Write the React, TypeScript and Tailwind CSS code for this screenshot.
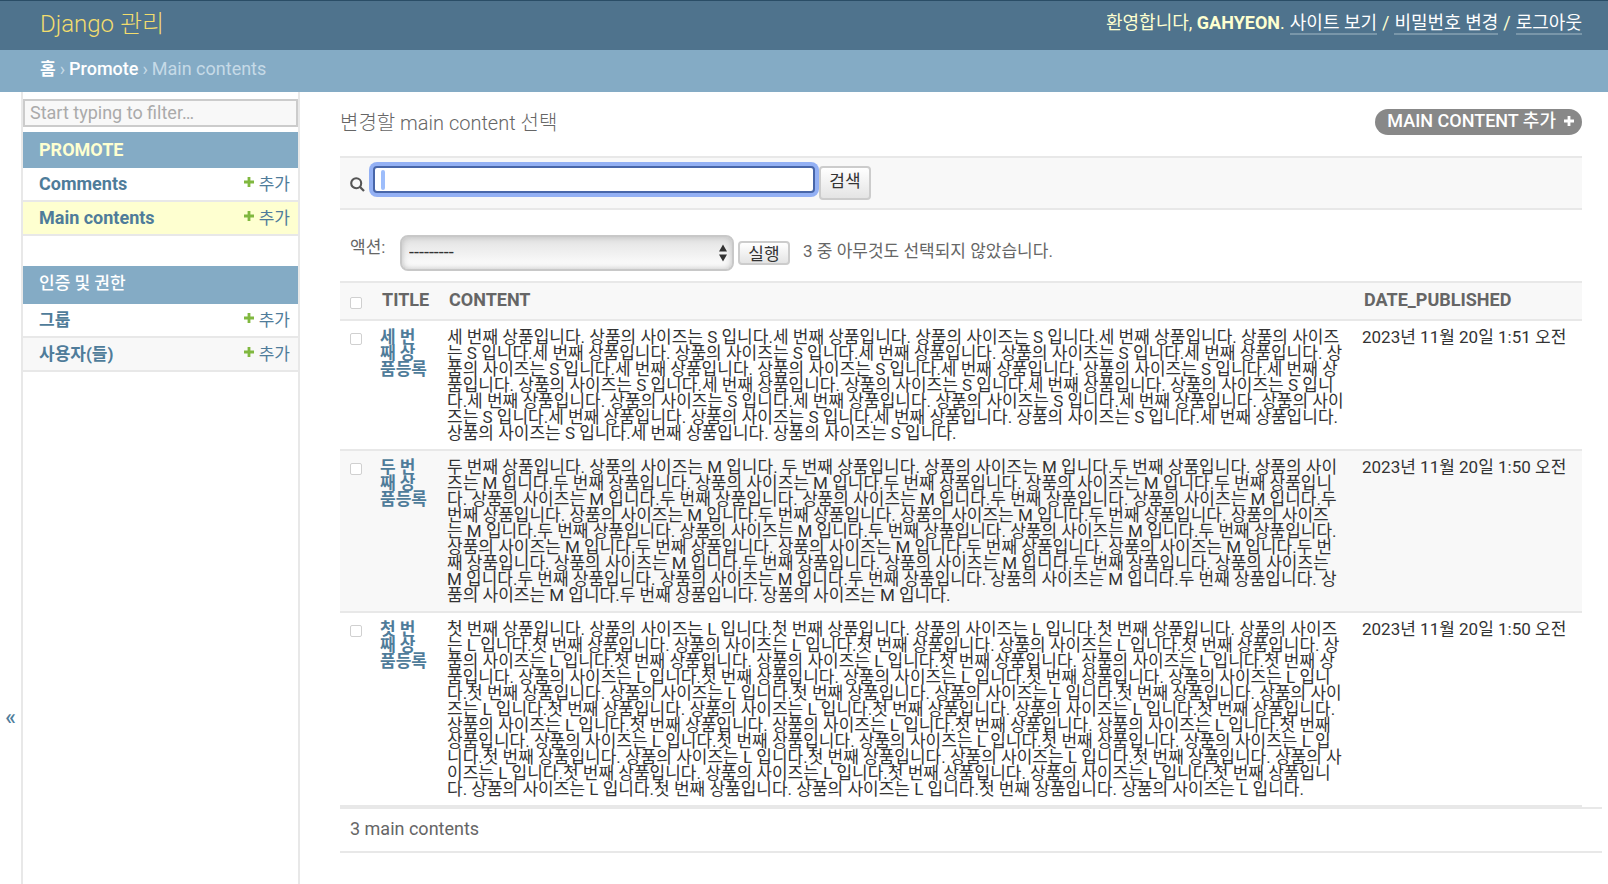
import React from "react";

const rows = [
  {
    title: "세 번째 상품등록",
    content: "세 번째 상품입니다. 상품의 사이즈는 S 입니다.".repeat(18),
    date: "2023년 11월 20일 1:51 오전",
  },
  {
    title: "두 번째 상품등록",
    content: [
      "두 번째 상품입니다. 상품의 사이즈는 M 입니다. 두 번째 상품입니다. 상품의 사이즈는 M 입니다.두 번째 상품입니다. 상품의 사이",
      "즈는 M 입니다.두 번째 상품입니다. 상품의 사이즈는 M 입니다.두 번째 상품입니다. 상품의 사이즈는 M 입니다.두 번째 상품입니",
      "다. 상품의 사이즈는 M 입니다.두 번째 상품입니다. 상품의 사이즈는 M 입니다.두 번째 상품입니다. 상품의 사이즈는 M 입니다.두",
      "번째 상품입니다. 상품의 사이즈는 M 입니다.두 번째 상품입니다. 상품의 사이즈는 M 입니다.두 번째 상품입니다. 상품의 사이즈",
      "는 M 입니다.두 번째 상품입니다. 상품의 사이즈는 M 입니다.두 번째 상품입니다. 상품의 사이즈는 M 입니다.두 번째 상품입니다.",
      "상품의 사이즈는 M 입니다.두 번째 상품입니다. 상품의 사이즈는 M 입니다.두 번째 상품입니다. 상품의 사이즈는 M 입니다.두 번",
      "째 상품입니다. 상품의 사이즈는 M 입니다.두 번째 상품입니다. 상품의 사이즈는 M 입니다.두 번째 상품입니다. 상품의 사이즈는",
      "M 입니다.두 번째 상품입니다. 상품의 사이즈는 M 입니다.두 번째 상품입니다. 상품의 사이즈는 M 입니다.두 번째 상품입니다. 상",
      "품의 사이즈는 M 입니다.두 번째 상품입니다. 상품의 사이즈는 M 입니다.",
    ].join("\n"),
    date: "2023년 11월 20일 1:50 오전",
  },
  {
    title: "첫 번째 상품등록",
    content: "첫 번째 상품입니다. 상품의 사이즈는 L 입니다.".repeat(30),
    date: "2023년 11월 20일 1:50 오전",
  },
];

function Plus({ className }: { className: string }) {
  return (
    <svg viewBox="0 0 10 10" className={className} aria-hidden="true">
      <path d="M3.6 0h2.8v3.6H10v2.8H6.4V10H3.6V6.4H0V3.6h3.6z" fill="currentColor" />
    </svg>
  );
}

function AppModule({
  name,
  upper,
  models,
}: {
  name: string;
  upper?: boolean;
  models: { name: string; bg: string }[];
}) {
  return (
    <section className="mb-[30px]">
      <h2
        className={
          upper
            ? "flex h-9 items-center bg-[#84abc5] px-4 pb-px text-lg font-bold text-[#feffd0]"
            : "flex h-[38px] items-center bg-[#84abc5] px-4 pb-1 text-[17px] font-medium text-white"
        }
      >
        <a href="#">{name}</a>
      </h2>
      <ul>
        {models.map((m) => (
          <li
            key={m.name}
            className={`flex h-[34px] items-center justify-between border-b-2 border-[#e8e8e8] pr-2 pb-px pl-4 text-[#4f7c9a] ${m.bg}`}
          >
            <a href="#" className={upper ? "text-lg font-bold" : "font-bold"}>
              {m.name}
            </a>
            <a href="#" className="flex items-center gap-[5px]">
              <Plus className="mb-1 size-[10px] text-[#80b83f]" />
              추가
            </a>
          </li>
        ))}
      </ul>
    </section>
  );
}

function Check({ label }: { label: string }) {
  return (
    <input
      type="checkbox"
      aria-label={label}
      className="block size-3 appearance-none rounded-[2px] border border-[#d0d0d0] bg-white"
    />
  );
}

export default function App() {
  return (
    <div className="flex min-h-screen flex-col bg-white font-[Roboto,'Noto_Sans_CJK_KR',sans-serif] text-[17px] leading-5 text-[#333]">
      <header className="flex h-[50px] items-center justify-between border-t border-[#2a4d66] bg-[#4f738d] pr-[26px] pb-1 pl-10 text-[#feffd0]">
        <h1 className="text-2xl font-light text-[#f3dd6d]">
          <a href="#">Django 관리</a>
        </h1>
        <nav className="flex gap-[5px] text-lg leading-5">
          <span>
            환영합니다, <strong>GAHYEON</strong>.
          </span>
          <a href="#" className="border-b-2 border-[#7996a9] text-white">
            사이트 보기
          </a>
          /
          <a href="#" className="border-b-2 border-[#7996a9] text-white">
            비밀번호 변경
          </a>
          /
          <a href="#" className="border-b-2 border-[#7996a9] text-white">
            로그아웃
          </a>
        </nav>
      </header>
      <nav className="flex h-[42px] items-center gap-1 bg-[#84abc5] pb-1 pl-10 text-lg leading-5 text-[#c6dae7]">
        <a href="#" className="text-[17px] font-bold text-white">
          홈
        </a>
        ›
        <a href="#" className="font-medium text-white">
          Promote
        </a>
        › <span>Main contents</span>
      </nav>
      <div className="flex grow">
        <button
          aria-label="내비게이션 전환"
          className="flex w-[23px] shrink-0 items-start justify-center border-r-2 border-[#e8e8e8] pt-[613px] text-[22px] leading-6 font-medium text-[#4f7c9a]"
        >
          «
        </button>
        <aside className="w-[277px] shrink-0 border-r-2 border-[#e8e8e8] pt-[7px]">
          <input
            type="search"
            aria-label="Filter navigation items"
            placeholder="Start typing to filter…"
            className="mb-[5px] block h-7 w-full border-2 border-[#ccc] bg-[#f8f8f8] px-[5px] text-lg placeholder:text-[#aaa]"
          />
          <AppModule
            name="PROMOTE"
            upper
            models={[
              { name: "Comments", bg: "bg-white" },
              { name: "Main contents", bg: "bg-[#feffd0]" },
            ]}
          />
          <AppModule
            name="인증 및 권한"
            models={[
              { name: "그룹", bg: "bg-white" },
              { name: "사용자(들)", bg: "bg-[#f8f8f8]" },
            ]}
          />
        </aside>
        <main className="min-w-0 grow pr-[26px] pb-8 pl-10">
          <div className="flex h-16 items-start justify-between pt-[17px]">
            <h1 className="pt-0.5 text-xl leading-6 font-light text-[#666]">변경할 main content 선택</h1>
            <a
              href="#"
              className="flex h-[26px] items-center gap-2 rounded-full bg-[#888] pr-2 pb-0.5 pl-3 text-lg font-medium text-white"
            >
              MAIN CONTENT 추가
              <Plus className="size-[10px]" />
            </a>
          </div>
          <form
            className="flex h-[54px] items-start border-y-2 border-[#e8e8e8] bg-[#f8f8f8] pt-2 pl-[10px]"
            onSubmit={(e) => e.preventDefault()}
          >
            <label htmlFor="searchbar" className="mt-[11px] mr-2" aria-label="검색">
              <svg viewBox="0 0 15 15" className="size-[15px]" fill="none" stroke="#555">
                <circle cx="6.2" cy="6.2" r="5" strokeWidth="2.1" />
                <path d="M9.8 9.8L14 14" strokeWidth="2.3" />
              </svg>
            </label>
            <div className="relative">
              <input
                id="searchbar"
                type="text"
                className="block h-[27px] w-[442px] rounded-[4px] border-2 border-[#4866a9] bg-white px-2 ring-4 ring-[#93b0f4] outline-none"
              />
              <span className="absolute top-1 left-2 h-5 w-1 rounded-full bg-[#9dbdfb]" />
            </div>
            <button className="ml-1 h-[34px] w-[52px] rounded-[4px] border-2 border-[#ccc] bg-linear-to-b from-white to-[#e4e4e4] pb-1">
              검색
            </button>
          </form>
          <div className="flex h-[71px] items-start pt-[25px] pl-[10px] text-[#666]">
            <label htmlFor="action" className="mt-0.5 w-[50px]">
              액션:
            </label>
            <div className="relative">
              <select
                id="action"
                className="block h-9 w-[334px] appearance-none rounded-[8px] border-2 border-[#c8c8c8] bg-linear-to-b from-[#e2e2e2] to-white px-[7px] pb-0.5 text-lg text-[#333] shadow-[inset_0_0_6px_#bbb]"
              >
                <option>---------</option>
              </select>
              <svg viewBox="0 0 8 18" className="pointer-events-none absolute top-[9px] right-[7px] h-[18px] w-2" fill="#333">
                <path d="M4 0.5l4 7H0zM4 17.5l4-7H0z" />
              </svg>
            </div>
            <button className="mt-1.5 ml-1 h-6 w-[52px] rounded-[4px] border-2 border-[#ccc] bg-linear-to-b from-white to-[#e4e4e4] pt-px leading-5 text-[#333]">
              실행
            </button>
            <span className="mt-[6px] ml-[13px]">3 중 아무것도 선택되지 않았습니다.</span>
          </div>
          <table className="w-full table-fixed border-separate border-spacing-0 text-left">
            <colgroup>
              <col className="w-8" />
              <col className="w-[67px]" />
              <col />
              <col className="w-[228px]" />
            </colgroup>
            <thead className="text-lg leading-5 text-[#666]">
              <tr className="h-10 bg-[#f8f8f8] align-middle">
                <th className="border-y-2 border-[#e8e8e8] pt-1 pl-[10px]">
                  <Check label="모두 선택" />
                </th>
                <th className="border-y-2 border-[#e8e8e8] pb-0.5 pl-[10px]">TITLE</th>
                <th className="border-y-2 border-[#e8e8e8] pb-0.5 pl-[10px]">CONTENT</th>
                <th className="border-y-2 border-[#e8e8e8] pb-0.5 pl-[10px]">DATE_PUBLISHED</th>
              </tr>
            </thead>
            <tbody className="leading-4">
              {rows.map((r) => (
                <tr key={r.title} className="align-top even:bg-[#f8f8f8]">
                  <td className="border-b-2 border-[#e8e8e8] pt-3 pl-[10px]">
                    <Check label={r.title} />
                  </td>
                  <th className="border-b-2 border-[#e8e8e8] p-2 text-[#4f7c9a]">
                    <a href="#">{r.title}</a>
                  </th>
                  <td className="border-b-2 border-[#e8e8e8] p-2 whitespace-pre-line">{r.content}</td>
                  <td className="border-b-2 border-[#e8e8e8] p-2 whitespace-nowrap">{r.date}</td>
                </tr>
              ))}
            </tbody>
          </table>
          <p className="-mr-5 flex h-[46px] items-center border-y-2 border-[#e8e8e8] pb-0.5 pl-[10px] text-lg leading-5 text-[#666]">
            3 main contents
          </p>
        </main>
      </div>
    </div>
  );
}
